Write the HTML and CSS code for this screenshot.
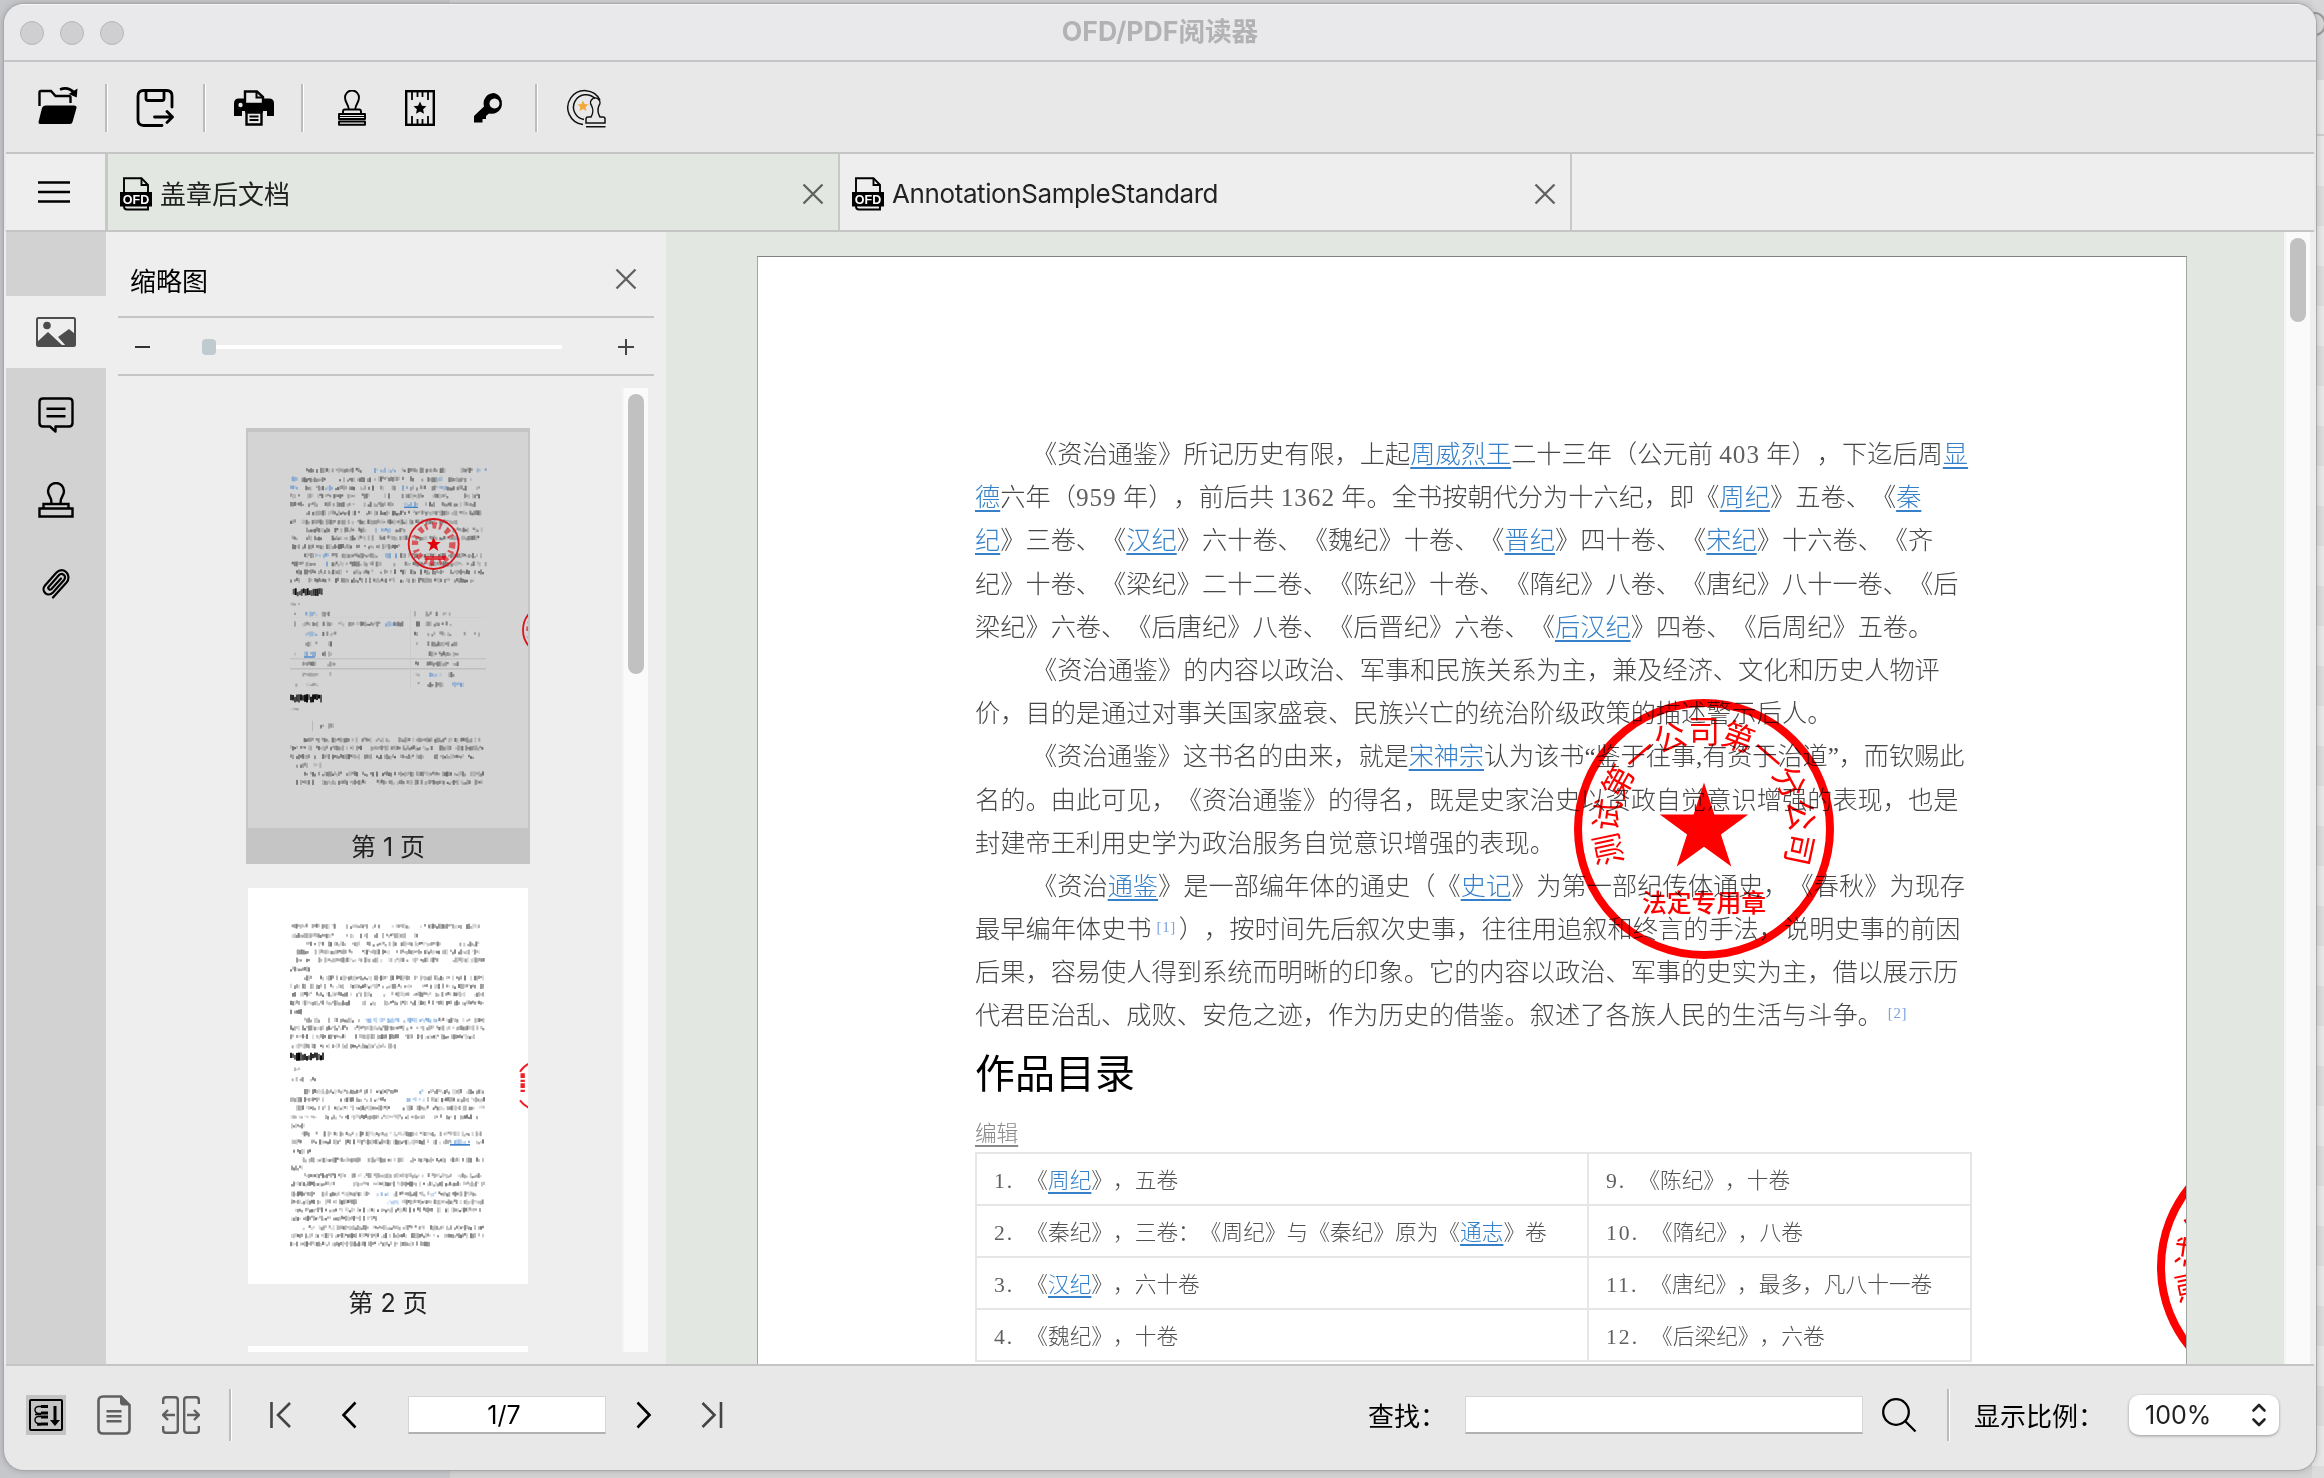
FILE: index.html
```html
<!DOCTYPE html>
<html lang="zh-CN">
<head>
<meta charset="utf-8">
<title>OFD/PDF阅读器</title>
<link rel="stylesheet" href="styles.css">
</head>
<body>
<div class="desk-strip"><i class="desk-ring"></i></div>
<div class="window">
  <header class="titlebar">
    <div class="lights"><i></i><i></i><i></i></div>
    <h1>OFD/PDF阅读器</h1>
  </header>

  <div class="toolbar">
    <svg class="t-open" width="40" height="38" viewBox="0 0 40 38"><path d="M1.500 19V5.500q0-1.500 1.500-1.500H13l4.500 5H31q1.500 0 1.500 1.500V16" fill="none" stroke="#000" stroke-width="2.400"/><path d="M7.500 18.500H36q3 0 2.500 2.500l-4 14q-.5 2-2.500 2H2q-1.700 0-1.500-2L4 21q.7-2.500 3.500-2.500z"/><path d="M22 2.500Q30-1 36.500 6" fill="none" stroke="#000" stroke-width="2.600"/><path d="M39.500 1.500l-.8 9-8-3.500z"/></svg>
    <i class="sep s1"></i>
    <svg class="t-save" width="38" height="38" viewBox="0 0 38 38" fill="none" stroke="#000" stroke-width="2.800" stroke-linejoin="round" stroke-linecap="round"><path d="M26 36.500H7.500q-5.500 0-5.500-5.500V7q0-5.500 5.500-5.500h23q5.500 0 5.500 5.500v11M10 2v7.500q0 2 2 2h14q2 0 2-2V2M18.500 28H36M31 22.500l5.500 5.500-5.500 5.500"/></svg>
    <i class="sep s2"></i>
    <svg class="t-print" width="40" height="36" viewBox="0 0 40 36"><path d="M5 8.500h30q5 0 5 5V26h-7v-5H8v5H0V13.500q0-5 5-5z"/><path d="M11 14V1.500h12L29 7v7z" fill="#e8e8e8" stroke="#000" stroke-width="2.400"/><path d="M22.500 2v5.500H28" fill="none" stroke="#000" stroke-width="2"/><circle cx="6.500" cy="15" r="2.200" fill="#e8e8e8"/><path d="M12.500 22.500h15v12h-15z" fill="#e8e8e8" stroke="#000" stroke-width="2.400"/><path d="M11 21.500h18M15.500 26.500h9M15.500 30h9" stroke="#000" stroke-width="2.200"/></svg>
    <i class="sep s3"></i>
    <svg class="t-stamp" width="28" height="36" viewBox="0 0 28 36" fill="none" stroke="#000" stroke-width="1.900"><path d="M10.500 19.500c1-4-3.500-6-3.500-12a7 7 0 0 1 14 0c0 6-4.500 8-3.500 12M5 24v-2.500q0-2 2-2h14q2 0 2 2V24M1 24h26v5H1zM1 31.500h26v3.200H1z" stroke-linejoin="round"/><path d="M1 26.500h26" stroke-width="1"/></svg>
    <svg class="t-ticket" width="30" height="36" viewBox="0 0 30 36" fill="none" stroke="#000" stroke-width="2.200"><rect x="1.200" y="1.200" width="27.600" height="33.600" stroke-width="2.400"/><path d="M7 2v8M12.500 2v5M17.500 2v5M23 2v8M7 34v-8M12.500 34v-5M17.500 34v-5M23 34v-8" stroke-width="1.800"/><path d="M15 11.500l1.900 4.200 4.600.5-3.400 3.100.9 4.500-4-2.300-4 2.300.9-4.500-3.400-3.100 4.600-.5z" fill="#000" stroke="none"/></svg>
    <svg class="t-key" width="32" height="32" viewBox="0 0 32 32"><path fill-rule="evenodd" d="M20.500 1a10.500 10.500 0 1 1-4.500 20.500L13 24v3H9.500v3.500H1V24L11 14.500A10.500 10.500 0 0 1 20.500 1zm1 5.500a5 5 0 1 0 .01 0z"/></svg>
    <i class="sep s4"></i>
    <svg class="t-seal" width="40" height="40" viewBox="0 0 40 40" fill="none" stroke="#111" stroke-width="1.500"><path d="M34 12A17 17 0 1 0 17 36.500M29 10.500A12.500 12.500 0 1 0 18 31.500"/><path d="M17 12.500l1.600 3.600 3.900.4-2.900 2.600.8 3.900-3.400-2-3.400 2 .8-3.900-2.900-2.600 3.900-.4z" fill="#f5a83a" stroke="none"/><path d="M25.500 17.500a4.700 4.700 0 1 1 7.500 0c-1.500 3-1.500 8 1 11.500h3q2 0 2 2v4H20v-4q0-2 2-2h3c2.500-3.500 2-8.500.5-11.500zM20 38.800h19.500"/></svg>
  </div>

  <nav class="tabs">
    <div class="menu"><svg width="32" height="24" viewBox="0 0 32 24" stroke="#000" stroke-width="2.400"><path d="M0 2.500h32M0 12h32M0 21.500h32"/></svg></div>
    <div class="tab active">
      <svg class="ofd" width="32" height="34" viewBox="0 0 32 34"><path d="M4 15V1.200h17.500L28 8v7M4 27v2.500q0 3 3 3h21V27" fill="none" stroke="#000" stroke-width="1.900"/><path d="M21.500 1.500V8H28" fill="none" stroke="#000" stroke-width="1.900"/><rect y="15" width="32" height="14.500"/><text x="16" y="27" class="ofd-text">OFD</text></svg>
      <span>盖章后文档</span>
      <svg class="x" width="22" height="22" viewBox="0 0 22 22"><path d="M1.500 1.500l19 19M20.500 1.500l-19 19"/></svg>
    </div>
    <div class="tab">
      <svg class="ofd" width="32" height="34" viewBox="0 0 32 34"><path d="M4 15V1.200h17.500L28 8v7M4 27v2.500q0 3 3 3h21V27" fill="none" stroke="#000" stroke-width="1.900"/><path d="M21.500 1.500V8H28" fill="none" stroke="#000" stroke-width="1.900"/><rect y="15" width="32" height="14.500"/><text x="16" y="27" class="ofd-text">OFD</text></svg>
      <span class="latin">AnnotationSampleStandard</span>
      <svg class="x" width="22" height="22" viewBox="0 0 22 22"><path d="M1.500 1.500l19 19M20.500 1.500l-19 19"/></svg>
    </div>
  </nav>

  <main class="body">
    <aside class="rail">
      <div class="rail-item on"><svg width="40" height="30" viewBox="0 0 40 30"><rect x="1" y="1" width="38" height="28" rx="1.500" fill="none" stroke="#4d4d4d" stroke-width="2"/><circle cx="11" cy="8.500" r="3.800" fill="#4d4d4d"/><path d="M1 25l11-10L27 29H2zM22 20l11-8 6 5v12h-9z" fill="#4d4d4d"/></svg></div>
      <div class="rail-item r2"><svg width="36" height="36" viewBox="0 0 36 36" fill="none" stroke="#000" stroke-width="2.400" stroke-linejoin="round"><path d="M5 1.500h26q3.500 0 3.500 3.500v21q0 3.500-3.500 3.500H17.500V34.500L12 29.500H5q-3.500 0-3.500-3.500V5Q1.500 1.500 5 1.500zM8.500 11.800h19M8.500 19.300h19"/></svg></div>
      <div class="rail-item r3"><svg width="36" height="36" viewBox="0 0 36 36" fill="none" stroke="#000" stroke-width="2.400"><path d="M13 22c2-6-3-7-3-13a8 8 0 0 1 16 0c0 6-5 7-3 13M5.500 26.500V22h25v4.500M1.500 26.500h33v8h-33z"/></svg></div>
      <div class="rail-item r4"><svg width="30" height="32" viewBox="0 0 30 32" fill="none" stroke="#000" stroke-width="2.200" stroke-linecap="round"><path d="M12 30.500L25.500 15.500c6-7-3-17-10-10L4 18.500c-4.500 5.500 2.500 12.500 8 7L23 13c3-4-2-8-5-5L7.500 20c-1 2 1.500 3.500 3 2L20 11.500"/></svg></div>
    </aside>

    <section class="panel">
      <div class="panel-head"><span>缩略图</span><svg class="x" width="22" height="22" viewBox="0 0 22 22"><path d="M1.500 1.500l19 19M20.500 1.500l-19 19"/></svg></div>
      <div class="zoomer">
        <i class="minus"></i><div class="track"><i></i></div><i class="plus"></i>
      </div>
      <div class="thumb-area">
        <div class="thumbs">
          <figure class="thumb selected"><svg id="thumb1" width="280" height="396" viewBox="84 96 840 1188"></svg><figcaption>第 1 页</figcaption></figure>
          <figure class="thumb"><svg id="thumb2" width="280" height="396" viewBox="84 84 840 1188"></svg><figcaption>第 2 页</figcaption></figure>
          <figure class="thumb"><svg width="280" height="396"></svg></figure>
        </div>
        <div class="vscroll"><i></i></div>
      </div>
    </section>

    <section class="doc">
      <article class="page">
        <div class="text">
          <p class="in">《资治通鉴》所记历史有限，上起<a>周威烈王</a>二十三年（公元前 <b>403</b> 年），下迄后周<a>显</a></p>
          <p><a>德</a>六年（<b>959</b> 年），前后共 <b>1362</b> 年。全书按朝代分为十六纪，即《<a>周纪</a>》五卷、《<a>秦</a></p>
          <p><a>纪</a>》三卷、《<a>汉纪</a>》六十卷、《魏纪》十卷、《<a>晋纪</a>》四十卷、《<a>宋纪</a>》十六卷、《齐</p>
          <p>纪》十卷、《梁纪》二十二卷、《陈纪》十卷、《隋纪》八卷、《唐纪》八十一卷、《后</p>
          <p>梁纪》六卷、《后唐纪》八卷、《后晋纪》六卷、《<a>后汉纪</a>》四卷、《后周纪》五卷。</p>
          <p class="in">《资治通鉴》的内容以政治、军事和民族关系为主，兼及经济、文化和历史人物评</p>
          <p>价，目的是通过对事关国家盛衰、民族兴亡的统治阶级政策的描述警示后人。</p>
          <p class="in quote">《资治通鉴》这书名的由来，就是<a>宋神宗</a>认为该书“鉴于往事,有资于治道”，而钦赐此</p>
          <p>名的。由此可见，《资治通鉴》的得名，既是史家治史以资政自觉意识增强的表现，也是</p>
          <p>封建帝王利用史学为政治服务自觉意识增强的表现。</p>
          <p class="in">《资治<a>通鉴</a>》是一部编年体的通史（《<a>史记</a>》为第一部纪传体通史，《春秋》为现存</p>
          <p>最早编年体史书<sup>[1]</sup>），按时间先后叙次史事，往往用追叙和终言的手法，说明史事的前因</p>
          <p>后果，容易使人得到系统而明晰的印象。它的内容以政治、军事的史实为主，借以展示历</p>
          <p>代君臣治乱、成败、安危之迹，作为历史的借鉴。叙述了各族人民的生活与斗争。<sup class="end">[2]</sup></p>
        </div>
        <h2>作品目录</h2>
        <div class="edit"><u>编辑</u></div>
        <table>
          <tr><td><b>1.</b>《<a>周纪</a>》，五卷</td><td><b>9.</b>《陈纪》，十卷</td></tr>
          <tr><td><b>2.</b>《秦纪》，三卷：《周纪》与《秦纪》原为《<a>通志</a>》卷</td><td><b>10.</b>《隋纪》，八卷</td></tr>
          <tr><td><b>3.</b>《<a>汉纪</a>》，六十卷</td><td><b>11.</b>《唐纪》，最多，凡八十一卷</td></tr>
          <tr><td><b>4.</b>《魏纪》，十卷</td><td><b>12.</b>《后梁纪》，六卷</td></tr>
        </table>
        <svg class="seal seal-main" width="262" height="262" viewBox="-131 -131 262 262">
          <g id="seal"><circle r="126" fill="none" stroke="#f00" stroke-width="8"/>
          <path fill="#f00" d="M0-46.500L10.400-14.400 44.200-14.400 16.900 5.500 27.300 37.600 0 17.800-27.300 37.600-16.900 5.500-44.200-14.400-10.400-14.400z"/>
          <g class="ring">
            <text transform="rotate(-102) translate(0 -86)">测</text><text transform="rotate(-81.600) translate(0 -86)">试</text><text transform="rotate(-61.200) translate(0 -86)">第</text><text transform="rotate(-40.800) translate(0 -86)">一</text><text transform="rotate(-20.400) translate(0 -86)">公</text><text transform="translate(0 -86)">司</text><text transform="rotate(20.400) translate(0 -86)">第</text><text transform="rotate(40.800) translate(0 -86)">一</text><text transform="rotate(61.200) translate(0 -86)">分</text><text transform="rotate(81.600) translate(0 -86)">公</text><text transform="rotate(102) translate(0 -86)">司</text>
          </g>
          <text class="seal-foot" x="0" y="83">法定专用章</text></g>
        </svg>
        <svg class="seal seal-edge" width="262" height="262" viewBox="-131 -131 262 262"><use href="#seal"/></svg>
      </article>
    </section>
    <div class="vscroll main"><i></i></div>
  </main>

  <footer class="status">
    <div class="mode on"><svg width="34" height="32" viewBox="0 0 34 32" fill="none" stroke="#000" stroke-width="2"><rect x="1" y="1" width="32" height="30" rx="1"/><path d="M12 7.500H9.500a3.500 3.500 0 0 0 0 7H12M12 17.500H9.500a3.500 3.500 0 0 0 0 7H12M12 15.500H6M12 26H8" stroke-width="1.400"/><path d="M12 7.500h7M12 14h7M12 18h7M12 25h7" stroke-width="3"/><path d="M26 7v16" stroke-width="3"/><path d="M21 21h10l-5 6z" fill="#000" stroke="none"/></svg></div>
    <svg class="m2" width="34" height="40" viewBox="0 0 34 40"><path d="M24 1.500H6Q1.500 1.500 1.500 6v28q0 4.500 4.500 4.500h22q4.500 0 4.500-4.500V10z" fill="none" stroke="#606060" stroke-width="2.600"/><path d="M23 1l10 9.500h-7q-3 0-3-3zM9.500 15h15v2.400h-15zM9.500 20h15v2.400h-15zM9.500 25h15v2.400h-15z" fill="#606060"/></svg>
    <svg class="m3" width="38" height="38" viewBox="0 0 38 38" fill="none" stroke="#606060" stroke-width="2.400"><path d="M1.200 8V4q0-2.800 2.800-2.800h9q2.800 0 2.800 2.800v30q0 2.800-2.800 2.800H4q-2.800 0-2.800-2.800v-4M36.800 8V4q0-2.800-2.800-2.800h-9q-2.800 0-2.800 2.800v30q0 2.800 2.800 2.800h9q2.800 0 2.800-2.800v-4M13 19H1.500M6 14l-5 5 5 5M25 19h11.500M32 14l5 5-5 5"/></svg>
    <i class="sep s5"></i>
    <svg class="n1" width="22" height="28" viewBox="0 0 22 28" fill="none" stroke="#444" stroke-width="2.600"><path d="M1.500 1v26M20 2L8 14l12 12"/></svg>
    <svg class="n2" width="16" height="28" viewBox="0 0 16 28" fill="none" stroke="#000" stroke-width="2.600"><path d="M14.500 1.500L2.500 14l12 12.500"/></svg>
    <div class="field pageno">1/7</div>
    <svg class="n3" width="16" height="28" viewBox="0 0 16 28" fill="none" stroke="#000" stroke-width="2.600"><path d="M1.500 1.500l12 12.500-12 12.500"/></svg>
    <svg class="n4" width="22" height="28" viewBox="0 0 22 28" fill="none" stroke="#444" stroke-width="2.600"><path d="M20 1v26M1.500 2l12 12-12 12"/></svg>
    <span class="find-label">查找：</span>
    <div class="field find"></div>
    <svg class="search" width="36" height="36" viewBox="0 0 36 36" fill="none" stroke="#000" stroke-width="2.300"><circle cx="15" cy="15" r="12.800"/><path d="M24 24l10.500 10.500"/></svg>
    <i class="sep s6"></i>
    <span class="zoom-label">显示比例：</span>
    <div class="select"><span>100%</span><svg width="16" height="26" viewBox="0 0 16 26" fill="none" stroke="#222" stroke-width="2.600" stroke-linecap="round" stroke-linejoin="round"><path d="M2.500 8.500L8 3l5.500 5.500M2.500 17.500L8 23l5.500-5.500"/></svg></div>
  </footer>
</div>
<script src="thumbs.js"></script>
</body>
</html>
```
FILE: styles.css
```css
* { box-sizing: border-box; }
i, b { font-style: normal; font-weight: inherit; }
html, body { height: 100%; }
html { overflow: hidden; }
body {
  margin: 0;
  display: flow-root;
  position: relative;
  overflow: hidden;
  font-family: Inter, "Noto Sans CJK SC", sans-serif;
  font-size: 26px;
  color: #111;
  text-spacing-trim: space-all;
  background: linear-gradient(90deg, #c6c7ca 0 450px, #d3d3d4 450px);
}
svg { display: block; flex: none; }

/* sliver of the desktop beyond the right window edge */
.desk-strip {
  position: absolute; top: 0; right: 0; width: 12px; height: 100%; overflow: hidden;
  background:
    linear-gradient(#d6d6d8 0 80px, #e7e7e7 80px 134px, #ccc 134px 136px, #e8e8e8 136px 186px, transparent 186px),
    repeating-linear-gradient(#dcdcdc 0 40px, #e7e7e7 40px 80px) 0 186px;
}
.desk-ring { position: absolute; left: -8px; top: 12px; width: 22px; height: 24px; border: 2px solid #999; border-radius: 50%; }

.window {
  position: relative;
  display: flex;
  flex-direction: column;
  margin: 4px 8px 0 4px;
  height: 1466px;
  background: #e8e8e8;
  border-radius: 20px;
  overflow: hidden;
  box-shadow: 0 0 0 1px #a9a9ab, 0 0 7px rgba(0, 0, 0, .25);
}

.titlebar {
  display: grid; grid-template-columns: 1fr auto 1fr; align-items: center;
  height: 58px; flex: none;
  background: #e9e9eb;
  border-bottom: 2px solid #c5c5c6;
  border-top: 1px solid #f6f6f7;
}
.lights { display: flex; gap: 16px; padding-left: 16px; }
.lights i { width: 24px; height: 24px; border-radius: 50%; background: #cfcfd1; border: 1px solid #b7b7b9; }
.titlebar h1 { margin: 0; padding-bottom: 4px; font-size: 26.600px; line-height: 40px; font-weight: 700; color: #b2b2b4; }

.toolbar { display: flex; align-items: center; height: 90px; flex: none; padding: 1px 0 0 34px; }
.sep { flex: none; width: 3px; height: 48px; background: linear-gradient(90deg, #bcbcbc 0 2px, #fff 2px); }
.s1 { margin-left: 27px; }
.t-save { margin-left: 28px; }
.s2 { margin-left: 29px; }
.t-print { margin-left: 28px; }
.s3 { margin-left: 27px; }
.t-stamp { margin-left: 34px; }
.t-ticket { margin-left: 39px; }
.t-key { margin-left: 38px; }
.s4 { margin-left: 30px; }
.t-seal { margin-left: 28px; }
.t-open { margin-top: -4px; }

.tabs { display: flex; height: 80px; flex: none; margin: 0 2px; background: #eee; border-top: 2px solid #c5c5c5; border-bottom: 2px solid #c5c5c5; }
.menu { width: 102px; padding-left: 32px; display: flex; align-items: center; border-right: 3px solid #c8c8c8; }
.menu svg { margin-top: -1px; }
.tab { display: flex; align-items: center; width: 732px; padding: 3px 14px 0 12px; border-right: 2px solid #c8c8c8; color: #222; }
.tab.active { background: #e2e8e1; }
.tab span { margin: -2px 0 0 8px; flex: 1; }
.tab .latin { margin: 0 0 0 8px; letter-spacing: -.4px; }
.ofd-text { font: 700 12.500px "Liberation Sans", sans-serif; fill: #fff; text-anchor: middle; }
.x path { fill: none; stroke: #606060; stroke-width: 2.300; }

.body { display: flex; flex: none; height: 1132px; padding: 0 6px 0 2px; background: #eee; }

.rail { width: 100px; flex: none; background: #d2d2d2; padding-top: 64px; }
.rail-item { display: flex; align-items: center; justify-content: center; height: 72px; }
.rail-item.on { background: #eee; }
.r2 { margin-top: 11px; }
.r3 { margin-top: 13px; }
.r4 { margin-top: 11px; }

.panel { width: 560px; flex: none; padding: 0 12px; display: flex; flex-direction: column; }
.panel-head { display: flex; align-items: center; justify-content: space-between; height: 86px; padding: 10px 17px 0 12px; border-bottom: 2px solid #c5c5c5; color: #000; }
.zoomer { display: flex; align-items: center; height: 58px; padding: 2px 20px 0 17px; border-bottom: 2px solid #c5c5c5; }
.minus { width: 15px; height: 2px; background: #333; }
.track { margin-left: 52px; width: 360px; height: 16px; background: linear-gradient(transparent 6px, #fff 6px 10px, transparent 10px); }
.track i { display: block; width: 14px; height: 16px; border-radius: 4px; background: #c0cbd0; }
.plus { margin-left: 56px; width: 16px; height: 16px; background: linear-gradient(#444, #444) center / 16px 2px no-repeat, linear-gradient(#444, #444) center / 2px 16px no-repeat; }
.thumb-area { display: flex; height: 964px; margin: 12px 0 0; overflow: hidden; }
.thumbs { width: 504px; padding: 40px 92px 0 128px; flex: none; }
.thumb { margin: 0 0 20px; width: 284px; border: 2px solid transparent; }
.thumb svg { background: #fff; }
.thumb figcaption { height: 38px; line-height: 38px; text-align: center; font-size: 25px; color: #222; }
.thumb.selected { background: #c5c5c5; border-color: #c5c5c5; padding-top: 2px; margin-bottom: 22px; height: 436px; }
.thumb.selected svg { background: #d4d4d4; }
.vscroll { width: 26px; flex: none; background: #fafafa; padding: 6px 6px 6px 4px; border-left: 2px solid #f4f4f4; }
.vscroll i { display: block; width: 16px; height: 280px; border-radius: 8px; background: #c1c1c1; }
.vscroll.main i { height: 84px; }

.doc { flex: 1; background: #e2e7e1; padding: 24px 97px 0 91px; overflow: hidden; }
.page {
  position: relative; overflow: hidden;
  height: 2020px; padding: 176px 216px 0 217px;
  background: #fff; border: 1px solid #a2a5a1; border-top: 1px solid #80837f;
  font-family: "Liberation Serif", "Noto Sans CJK SC", serif;
  font-weight: 300; color: #474747;
}
.text p { margin: 0; height: 43.200px; line-height: 43.200px; font-size: 25.200px; letter-spacing: .03px; white-space: nowrap; }
.text p.in { padding-left: 57px; }
.text p.quote { letter-spacing: -.08px; }
.text b { letter-spacing: 1px; color: #606060; }
.page a { color: #3580c8; text-decoration: underline 2px; text-underline-offset: 4px; text-decoration-skip-ink: none; }
sup { font-size: 15px; color: #7aa2e0; vertical-align: 6px; line-height: 0; margin: 0 3px 0 5px; letter-spacing: .6px; }
sup.end { margin-left: 5px; }
.page h2 { margin: 0; height: 78px; line-height: 66px; font-family: "Noto Sans CJK SC", sans-serif; font-size: 40px; font-weight: 400; color: #000; }
.edit { height: 36px; line-height: 37px; font-size: 21.600px; color: #888; }
.edit u { text-decoration: underline 2px; text-underline-offset: 4px; text-decoration-skip-ink: none; }
table { border-collapse: collapse; width: 997px; table-layout: fixed; font-size: 21.700px; color: #505050; }
td { border: 2px solid #e6e6e6; height: 52px; padding: 6px 0 2px 17px; line-height: 42px; white-space: nowrap; }
td:first-child { width: 612px; }
td b { letter-spacing: 2px; margin-right: 12px; color: #606060; }

.seal { position: absolute; mix-blend-mode: multiply; overflow: visible; }
.seal text { font-family: "Noto Sans CJK SC", sans-serif; font-weight: 500; fill: #f00; text-anchor: middle; }
.seal .ring text { font-size: 32px; font-weight: 400; }
.seal .seal-foot { font-size: 24.800px; }
.seal-main { left: 815px; top: 441px; }
.seal-edge { left: 1398px; top: 879px; }

.status { display: flex; align-items: center; flex: 1; border-top: 2px solid #c5c5c5; margin: 0 2px; padding-left: 20px; padding-bottom: 6px; color: #000; }
.mode { width: 40px; height: 40px; display: flex; align-items: center; justify-content: center; background: #c3c3c3; flex: none; }
.m2 { margin-left: 31px; }
.m3 { margin-left: 31px; }
.s5 { margin-left: 29px; height: 52px; }
.n1 { margin-left: 38px; }
.n2 { margin-left: 49px; }
.field { background: #fff; height: 38px; border: 1px solid #d5d5d5; border-bottom: 2px solid #b2b2b2; flex: none; }
.pageno { width: 198px; margin-left: 51px; text-align: center; line-height: 36px; font-size: 25px; padding-right: 6px; }
.n3 { margin-left: 30px; }
.n4 { margin-left: 49px; }
.find-label { margin: -2px 0 0 645px; width: 97px; flex: none; }
.find { width: 398px; }
.search { margin-left: 18px; }
.s6 { margin-left: 30px; height: 52px; }
.zoom-label { margin: -2px 0 0 24px; width: 155px; flex: none; white-space: nowrap; }
.select { width: 150px; height: 40px; flex: none; border-radius: 10px; background: #fff; box-shadow: 0 1px 3px rgba(0, 0, 0, .35); display: flex; align-items: center; justify-content: space-between; padding: 0 12px 0 16px; font-size: 25px; color: #222; }
```
FILE: thumbs.js
```js
// Paints the greeked page previews: every entry is [y, x1, x2, kind] in 1/3 px units.
let seed = 7;
const rnd = () => (seed = (seed * 16807) % 2147483647) / 2147483647;

function run(y, x1, x2, kind) {
  const tone = { t: '#3c3c3c', b: '#3f82cc', h: '#000', s: '#777' }[kind || 't'];
  const tall = kind === 'h' ? 25 : kind === 's' ? 11 : 16;
  let out = '';
  for (let x = x1; x < x2; x += 6) {
    if (kind !== 'h' && rnd() < 0.2) continue;
    const h = tall * (0.4 + rnd() * 0.6);
    const top = y - tall / 2 + rnd() * (tall - h);
    const o = kind === 'h' ? 0.55 + rnd() * 0.45 : 0.15 + rnd() * 0.5;
    out += `<rect x="${x}" y="${top.toFixed(1)}" width="6" height="${h.toFixed(1)}" fill="${tone}" opacity="${o.toFixed(2)}"/>`;
  }
  return out;
}
const paint = (id, rows, extra) => {
  document.getElementById(id).innerHTML = rows.map(r => run(...r)).join('') + extra;
};
const rule = (x, y, w, h, c) => `<rect x="${x}" y="${y}" width="${w}" height="${h}" fill="${c}"/>`;

const one = [
  [211,252,325],[211,335,420],[211,462,528,'b'],[211,545,705],[211,722,770],[211,770,796,'b'],
  [237,215,228,'b'],[239,245,312],[239,345,450],[237,462,580],[239,598,650],[237,650,680,'b'],[239,685,735],[239,750,768,'b'],
  [264,210,234,'b'],[264,256,272],[264,288,312],[264,315,335,'b'],[264,345,400],[264,420,495],[264,515,522],[264,540,560,'b'],[264,570,620],[264,635,650],[264,650,676,'b'],[264,680,740],[264,762,775],
  [288,210,235],[288,256,275],[288,292,365],[288,382,402],[288,425,458],[288,492,510],[288,545,615],[288,637,680],[288,732,780],
  [313,210,290],[313,308,405],[313,425,520],[313,552,594,'b'],[313,615,642],[313,665,765],
  [339,252,420],[339,438,570],[339,580,780],
  [366,210,228],[366,245,400],[366,412,710],
  [390,252,325],[390,343,440],[390,465,510,'b'],[390,520,580],[390,680,790],
  [414,215,232],[414,258,310],[414,335,460],[414,478,775],
  [440,210,535],
  [467,252,285],[467,285,325,'b'],[467,335,470],[467,495,535,'b'],[467,540,790],
  [492,215,302],[492,318,322,'b'],[492,335,490],[492,508,525],[492,542,795],
  [516,228,380],[516,400,462],[516,480,790],
  [541,210,250],[541,265,330],[541,345,520],[541,540,760],
  [577,218,308,'h'],[612,210,236,'s'],
  [642,222,228,'s'],[642,250,290,'b'],[642,305,330],[642,582,590],[642,617,648],[642,668,692,'s'],
  [672,222,230],[672,247,290],[672,308,338],[672,355,480],[672,495,520,'b'],[672,520,548],[672,582,595],[672,617,697],
  [702,256,290,'b'],[702,307,345],[702,582,590],[702,622,690],[702,725,733],[702,762,775],
  [732,256,290],[732,318,332],[732,582,596],[732,622,712],
  [762,222,230,'s'],[762,252,284,'b'],[762,306,342],[762,620,712],
  [792,247,290],[792,322,342],[792,585,594],[792,620,712],
  [824,247,290,'s'],[824,322,332],[824,587,594,'s'],[824,622,668,'b'],[824,685,712],
  [854,220,228],[854,247,290,'s'],[854,587,595],[854,622,668],[854,690,728,'b'],
  [895,210,305,'h'],[927,212,236,'s'],[978,288,338],
  [1020,245,410],[1020,425,512],[1020,535,780],
  [1044,210,275],[1044,282,432],[1044,452,635],[1044,652,788],
  [1070,210,285],[1070,300,610],[1070,630,770],
  [1096,228,260],[1096,280,302],
  [1122,252,790],[1147,228,278],[1147,300,435],[1147,470,790],
];
const stamp = (x, y, r) => `<g fill="none" stroke="#d8141c"><circle cx="${x}" cy="${y}" r="${r}" stroke-width="5.500"/><circle cx="${x}" cy="${y}" r="${r - 19}" stroke-width="19" stroke-dasharray="13 8 7 15" stroke-opacity=".65"/></g>`;
paint('thumb1', one,
  rule(210, 775, 588, 3, '#bcbcbc') + rule(210, 805, 588, 3, '#b4b4b4') + rule(571, 628, 2, 236, '#c6c6c6') + rule(277, 962, 2, 32, '#aaa')
  + rule(210, 652, 588, 1, '#cacaca') + rule(552, 320, 42, 4, '#3f82cc') + rule(252, 769, 32, 4, '#3f82cc')
  + stamp(641, 432, 75)
  + '<path fill="#e0000c" d="M641 410l6 16h15l-12 10 5 17-14-10-14 10 5-17-12-10h15z"/><rect x="614" y="468" width="62" height="12" fill="#e0000c" opacity=".7"/>'
  + stamp(984, 690, 75));

const two = [
  [199,215,345],[199,378,475],[199,515,565],[199,600,775],
  [227,215,340],[227,378,400],[227,420,590],
  [252,252,420],[252,440,665],[252,712,788],
  [276,230,398],[276,420,505],[276,528,775],
  [300,228,265],[300,295,650],[300,692,792],[327,210,270],
  [354,252,792],[379,210,372],[379,390,575],[379,600,792],
  [403,210,455],[403,490,735],[403,762,792],[429,210,388],[429,420,792],[455,210,246],
  [481,252,415],[481,436,652,'b'],[481,655,790],
  [504,210,385],[504,403,792],[530,210,375],[530,405,765],
  [558,215,285],[558,300,528],[590,210,308,'h'],[628,210,236,'s'],[658,215,248],[658,270,288],
  [695,252,530],[695,592,606,'b'],[695,624,788],
  [719,210,310],[719,360,495],[719,560,612,'b'],[719,615,792],
  [744,228,508],[744,548,792],[771,212,285,'s'],[771,315,610],[771,642,775],[798,213,250],
  [822,245,785],[846,215,250],[846,273,690],[846,690,750,'b'],[846,768,792],[875,213,270],
  [900,248,425],[900,443,550],[900,570,792],[924,213,245],
  [947,252,375],[947,395,780],[972,213,345],[972,393,792],
  [1002,213,280],[1002,305,445],[1002,470,502,'b'],[1002,520,625],[1002,625,648,'b'],[1002,655,768],
  [1026,213,410],[1026,500,535,'b'],[1026,545,790],[1050,213,780],[1075,213,470],
  [1103,248,610],[1103,630,792],[1127,213,655],[1127,672,788],[1152,210,625],
];
paint('thumb2', two, rule(690, 852, 60, 5, '#3f82cc')
  + '<g fill="none" stroke="#f02028"><path d="M926 611q-18 10-26 24M900 721q10 14 26 22" stroke-width="6"/><path d="M908 640v60" stroke-width="13" stroke-dasharray="14 5 7 4"/></g>');
```
